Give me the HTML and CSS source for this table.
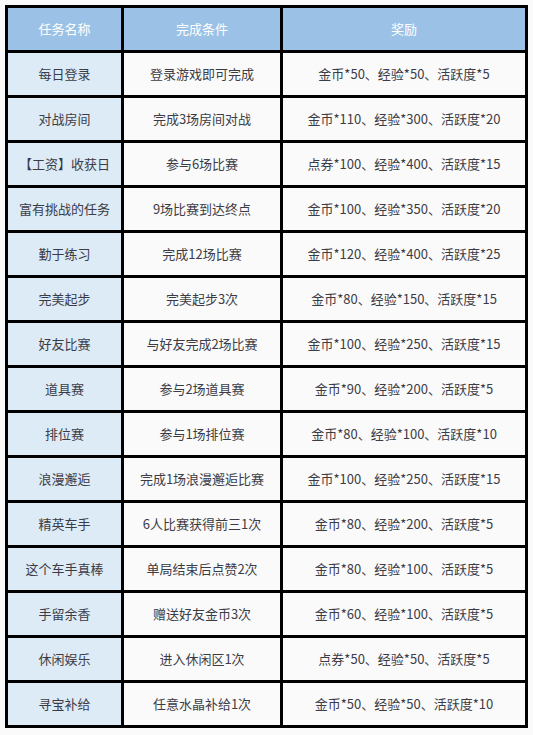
FILE: index.html
```html
<!DOCTYPE html>
<html lang="zh">
<head>
<meta charset="utf-8">
<link rel="stylesheet" href="styles.css">
</head>
<body>
<table class="tasks">
  <colgroup>
    <col class="c1"><col class="c2"><col class="c3">
  </colgroup>
  <thead>
    <tr><th>任务名称</th><th>完成条件</th><th>奖励</th></tr>
  </thead>
  <tbody>
    <tr><td class="name">每日登录</td><td>登录游戏即可完成</td><td>金币*50、经验*50、活跃度*5</td></tr>
    <tr><td class="name">对战房间</td><td>完成3场房间对战</td><td>金币*110、经验*300、活跃度*20</td></tr>
    <tr><td class="name">【工资】收获日</td><td>参与6场比赛</td><td>点券*100、经验*400、活跃度*15</td></tr>
    <tr><td class="name">富有挑战的任务</td><td>9场比赛到达终点</td><td>金币*100、经验*350、活跃度*20</td></tr>
    <tr><td class="name">勤于练习</td><td>完成12场比赛</td><td>金币*120、经验*400、活跃度*25</td></tr>
    <tr><td class="name">完美起步</td><td>完美起步3次</td><td>金币*80、经验*150、活跃度*15</td></tr>
    <tr><td class="name">好友比赛</td><td>与好友完成2场比赛</td><td>金币*100、经验*250、活跃度*15</td></tr>
    <tr><td class="name">道具赛</td><td>参与2场道具赛</td><td>金币*90、经验*200、活跃度*5</td></tr>
    <tr><td class="name">排位赛</td><td>参与1场排位赛</td><td>金币*80、经验*100、活跃度*10</td></tr>
    <tr><td class="name">浪漫邂逅</td><td>完成1场浪漫邂逅比赛</td><td>金币*100、经验*250、活跃度*15</td></tr>
    <tr><td class="name">精英车手</td><td>6人比赛获得前三1次</td><td>金币*80、经验*200、活跃度*5</td></tr>
    <tr><td class="name">这个车手真棒</td><td>单局结束后点赞2次</td><td>金币*80、经验*100、活跃度*5</td></tr>
    <tr><td class="name">手留余香</td><td>赠送好友金币3次</td><td>金币*60、经验*100、活跃度*5</td></tr>
    <tr><td class="name">休闲娱乐</td><td>进入休闲区1次</td><td>点券*50、经验*50、活跃度*5</td></tr>
    <tr><td class="name">寻宝补给</td><td>任意水晶补给1次</td><td>金币*50、经验*50、活跃度*10</td></tr>
  </tbody>
</table>
</body>
</html>
```
FILE: styles.css
```css
html, body {
  margin: 0;
  background: #fafafa;
}
body {
  padding: 5px;
  font-family: "Noto Sans CJK SC", "Noto Sans", sans-serif;
  font-size: 13px;
  color: #3c3c46;
}
.tasks {
  table-layout: fixed;
  width: 523px;
  border-collapse: separate;
  border-spacing: 3px;
  background: #000;
}
.c1 { width: 113px; }
.c2 { width: 156px; }
.c3 { width: 242px; }
.tasks th, .tasks td {
  height: 42px;
  padding: 0;
  text-align: center;
  vertical-align: middle;
  white-space: nowrap;
  background: #fafafa;
  line-height: 16px;
}
.tasks th {
  background: #9bc2e6;
  color: #ffffff;
  font-weight: normal;
}
.tasks td.name {
  background: #ddebf7;
}
```
